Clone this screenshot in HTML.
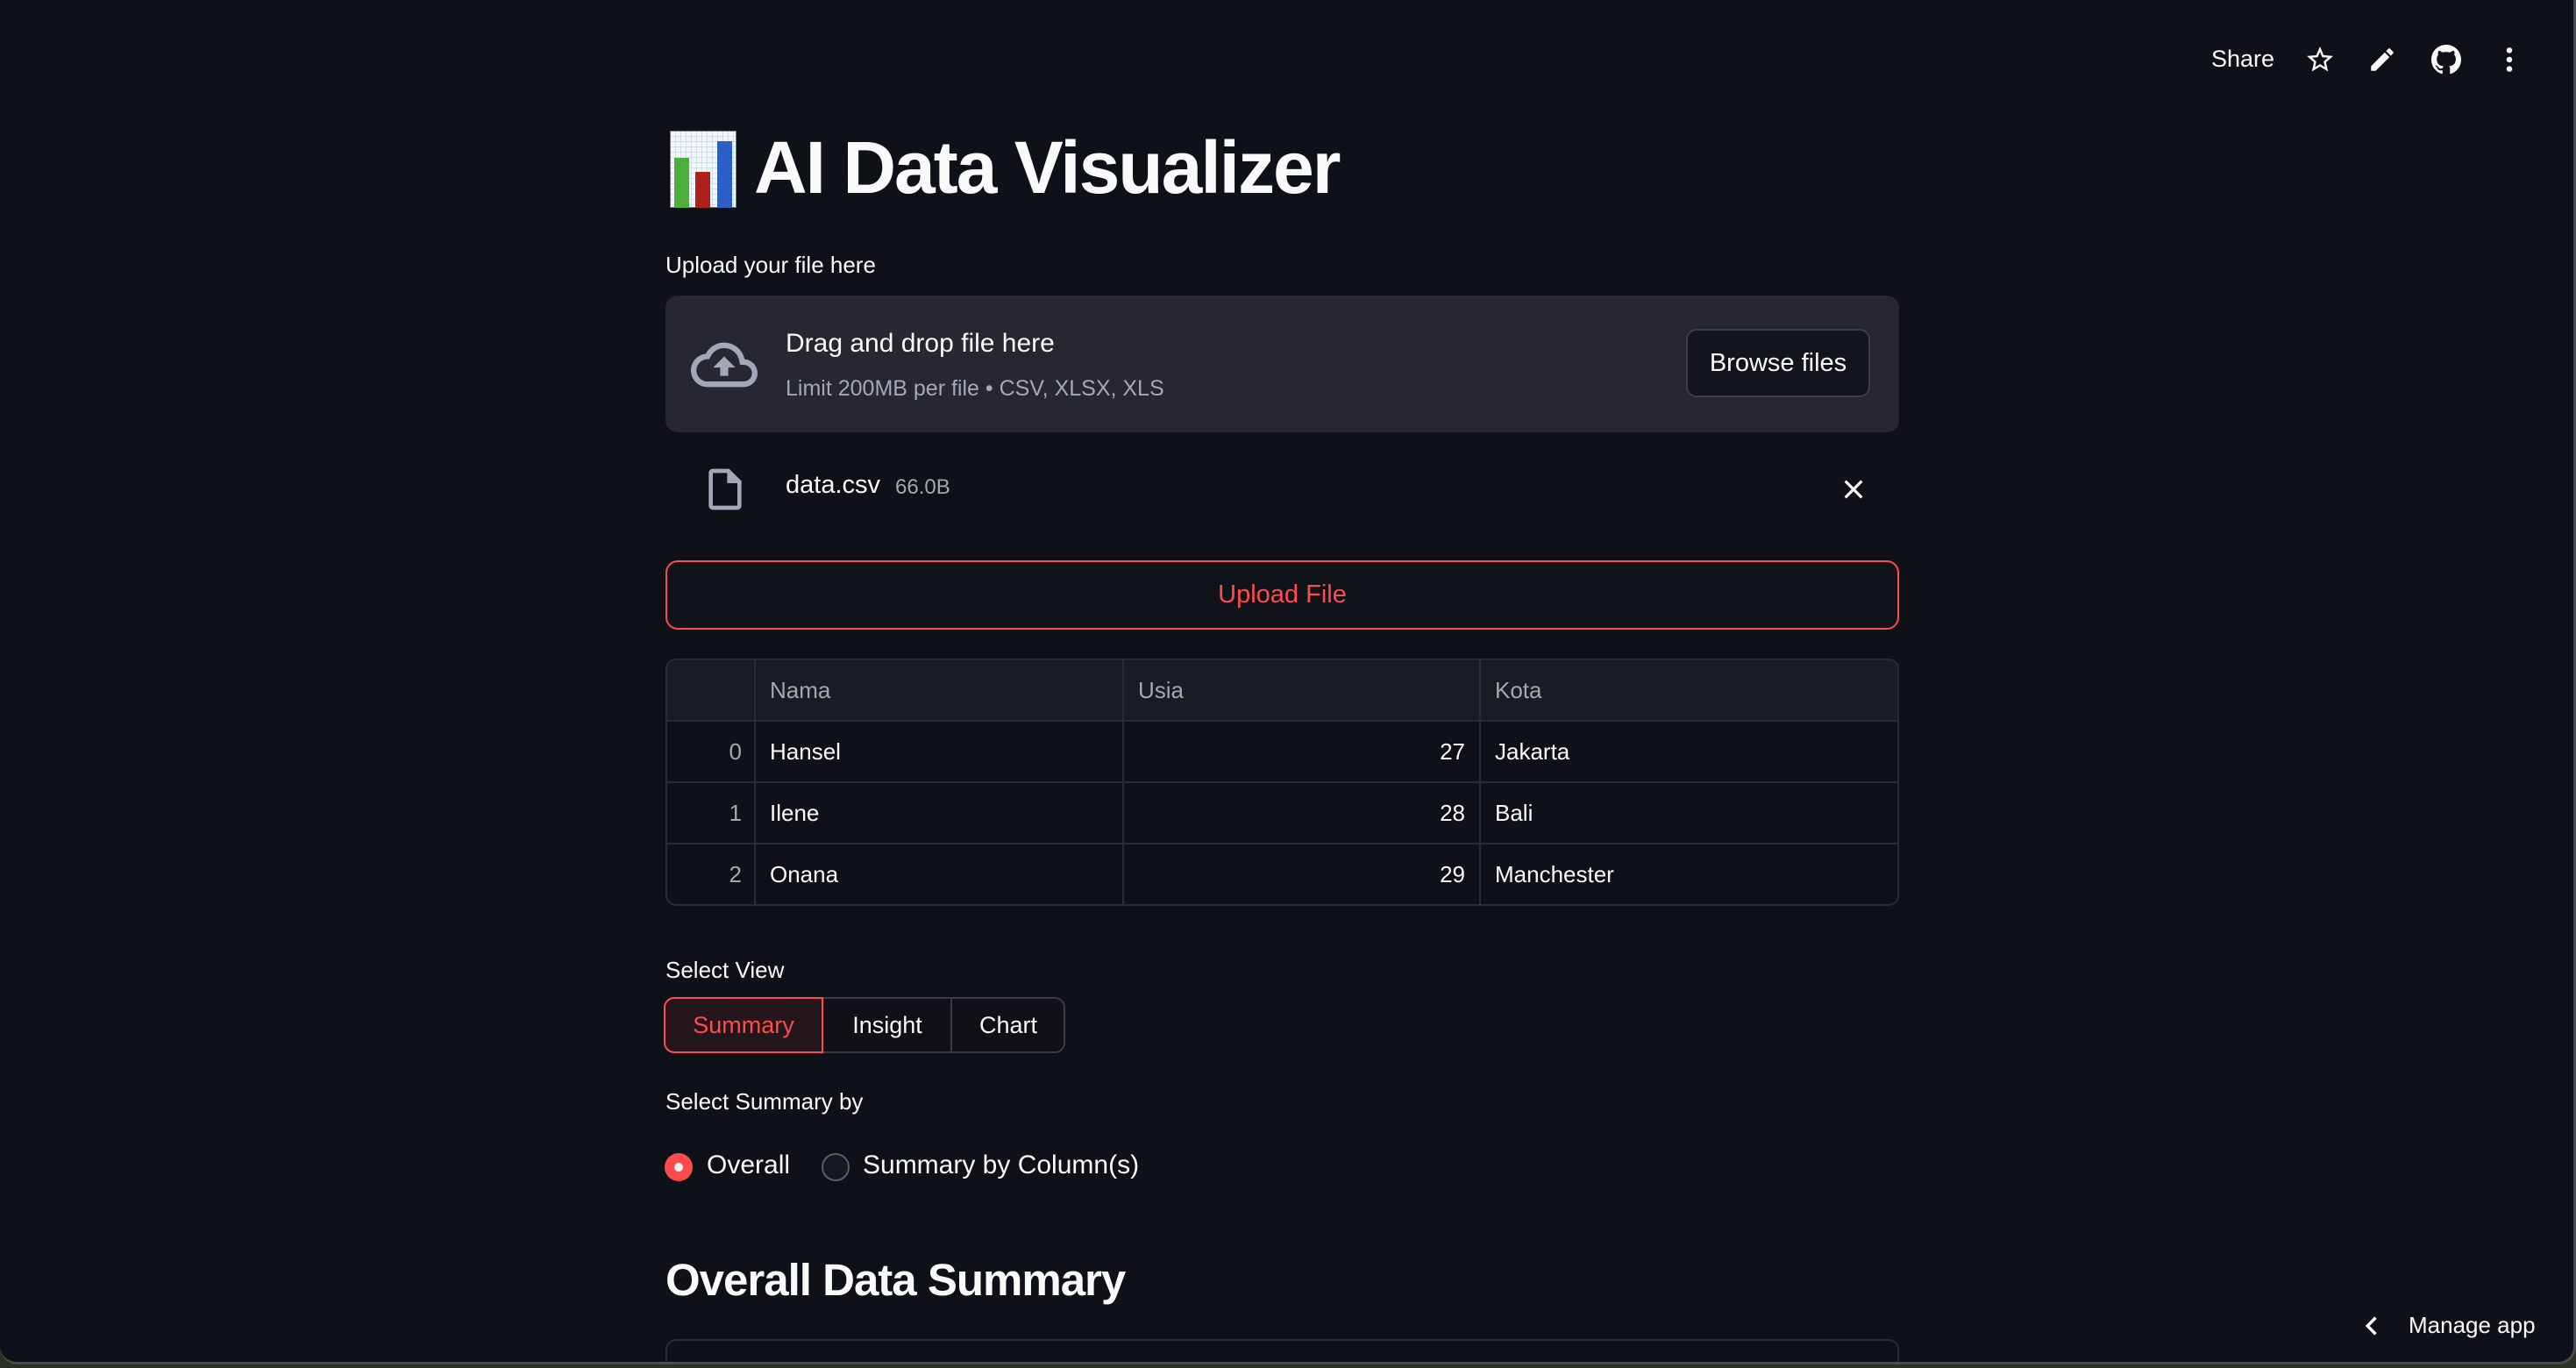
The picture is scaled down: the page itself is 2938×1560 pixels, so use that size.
<!DOCTYPE html>
<html><head><meta charset="utf-8">
<style>
*{margin:0;padding:0;box-sizing:border-box}
html,body{width:2938px;height:1560px;overflow:hidden;background:#2b3224}
body{font-family:"Liberation Sans",sans-serif;color:#fafafa;position:relative}
#win{position:absolute;left:0;top:0;width:2938px;height:1556px;background:#0e1117;border-right:3px solid #4a4b52;border-bottom:3px solid #4a4b52;border-radius:0 0 20px 20px;overflow:hidden}
.a{position:absolute;white-space:nowrap}
.lbl{font-size:26px;color:#fafafa}
.tbl{position:absolute;left:759px;top:751px;width:1407px;height:282px;border:2px solid #2a2c35;border-radius:12px;overflow:hidden}
.row{position:absolute;left:0;width:100%;height:70px;border-bottom:2px solid #2a2c35;font-size:26px}
.row div{position:absolute;top:0;height:100%;line-height:68px;border-right:2px solid #2a2c35}
.c0{left:0;width:101px;text-align:right;padding-right:14px;color:#a3a8b8}
.c1{left:101px;width:420px;padding-left:16px}
.c2{left:521px;width:407px;text-align:right;padding-right:16px}
.c3{left:928px;width:479px;padding-left:16px;border-right:none!important}
.hd div{color:#a3a8b8}
</style></head><body>
<div id="win">
<!-- header -->
<div class="a" style="left:2522px;top:52px;font-size:27px">Share</div>
<svg class="a" style="left:2628px;top:50px" width="36" height="36" viewBox="0 0 24 24"><path fill="#fafafa" d="M22 9.24l-7.19-.62L12 2 9.19 8.63 2 9.24l5.46 4.73L5.82 21 12 17.27 18.18 21l-1.63-7.03L22 9.24zM12 15.4l-3.76 2.27 1-4.28-3.32-2.88 4.38-.38L12 6.1l1.71 4.04 4.38.38-3.32 2.880 1 4.28L12 15.4z"/></svg>
<svg class="a" style="left:2700px;top:51px" width="34" height="34" viewBox="0 0 24 24"><path fill="#fafafa" d="M3 17.25V21h3.75L17.81 9.94l-3.75-3.75L3 17.25zM20.71 7.04a1 1 0 000-1.410l-2.34-2.34a1 1 0 00-1.41 0l-1.83 1.83 3.75 3.75 1.83-1.83z"/></svg>
<svg class="a" style="left:2773px;top:51px" width="34" height="34" viewBox="0 0 16 16"><path fill="#fafafa" d="M8 0C3.58 0 0 3.58 0 8c0 3.54 2.29 6.53 5.47 7.59.4.07.55-.17.55-.38 0-.19-.01-.82-.01-1.49-2.01.37-2.53-.49-2.69-.94-.09-.23-.48-.94-.82-1.13-.28-.15-.68-.52-.01-.53.63-.01 1.08.58 1.23.82.72 1.21 1.87.87 2.33.66.07-.52.28-.87.51-1.07-1.78-.2-3.64-.89-3.64-3.95 0-.87.31-1.59.82-2.15-.08-.2-.36-1.02.08-2.12 0 0 .67-.21 2.2.82.64-.18 1.32-.27 2-.27.68 0 1.36.09 2 .27 1.53-1.04 2.2-.82 2.2-.82.44 1.1.16 1.92.08 2.12.51.56.82 1.27.82 2.15 0 3.07-1.87 3.75-3.65 3.95.29.25.54.73.54 1.48 0 1.07-.01 1.93-.01 2.2 0 .21.15.46.55.38A8.013 8.013 0 0016 8c0-4.42-3.58-8-8-8z"/></svg>
<svg class="a" style="left:2845px;top:50px" width="34" height="36" viewBox="0 0 24 24"><circle cx="12" cy="4.5" r="2.3" fill="#fafafa"/><circle cx="12" cy="12" r="2.3" fill="#fafafa"/><circle cx="12" cy="19.5" r="2.3" fill="#fafafa"/></svg>

<!-- title -->
<svg class="a" style="left:764px;top:149px" width="76" height="88" viewBox="0 0 76 88">
<defs><pattern id="g" width="6" height="6" patternUnits="userSpaceOnUse"><rect width="6" height="6" fill="#f4f8fc"/><path d="M0 0H6M0 0V6" stroke="#c5d8ee" stroke-width="1.5"/></pattern></defs>
<rect x="0" y="0" width="76" height="88" fill="url(#g)" stroke="#777" stroke-width="2"/>
<rect x="5" y="31" width="17" height="57" fill="#4caf3c"/>
<rect x="29" y="47" width="17" height="41" fill="#ad2218"/>
<rect x="54" y="12" width="17" height="76" fill="#2b5fc4"/>
</svg>
<div class="a" style="left:860px;top:143px;font-size:84px;font-weight:bold;letter-spacing:-2px">AI Data Visualizer</div>

<div class="a lbl" style="left:759px;top:287px">Upload your file here</div>
<!-- dropzone -->
<div class="a" style="left:759px;top:337px;width:1407px;height:156px;background:#262730;border-radius:14px"></div>
<svg class="a" style="left:788px;top:378px" width="76" height="76" viewBox="0 0 24 24"><path fill="#a3a8b8" d="M19.35 10.04A7.49 7.490 0 0012 4C9.11 4 6.6 5.64 5.35 8.04A5.994 5.994 0 000 14c0 3.31 2.69 6 6 6h13c2.76 0 5-2.24 5-5 0-2.64-2.05-4.780-4.65-4.96zM19 18H6c-2.21 0-4-1.79-4-4 0-2.05 1.53-3.76 3.56-3.97l1.07-.11.5-.95A5.469 5.469 0 0112 6c2.62 0 4.88 1.86 5.39 4.43l.3 1.5 1.53.11A2.98 2.98 0 0122 15c0 1.65-1.35 3-3 3zM8 13h2.55v3h2.9v-3H16l-4-4z"/></svg>
<div class="a" style="left:896px;top:375px;font-size:30px">Drag and drop file here</div>
<div class="a" style="left:896px;top:429px;font-size:25px;color:#a3a8b8">Limit 200MB per file • CSV, XLSX, XLS</div>
<div class="a" style="left:1923px;top:375px;width:210px;height:78px;background:#13151c;border:2px solid #3d3f4a;border-radius:12px;font-size:29px;text-align:center;line-height:74px">Browse files</div>

<!-- file row -->
<svg class="a" style="left:796px;top:530px" width="62" height="56" viewBox="0 0 24 24"><path fill="#a3a8b8" d="M14 2H6c-1.1 0-2 .9-2 2v16c0 1.1.9 2 2 2h12c1.1 0 2-.9 2-2V8l-6-6zM6 20V4h7v5h5v11H6z"/></svg>
<div class="a" style="left:896px;top:537px;font-size:29px">data.csv</div>
<div class="a" style="left:1021px;top:542px;font-size:24px;color:#a3a8b8">66.0B</div>
<svg class="a" style="left:2098px;top:542px" width="32" height="32" viewBox="0 0 24 24"><path stroke="#fafafa" stroke-width="2.4" d="M5 5L19 19M19 5L5 19"/></svg>

<!-- upload button -->
<div class="a" style="left:759px;top:639px;width:1407px;height:79px;border:2px solid #ff4b4b;border-radius:14px;background:#11131a;color:#ff4b4b;font-size:29px;text-align:center;line-height:75px">Upload File</div>

<!-- table -->
<div class="tbl">
 <div class="row hd" style="top:0;background:#1a1c24"><div class="c0"></div><div class="c1">Nama</div><div class="c2" style="text-align:left;padding-left:16px">Usia</div><div class="c3">Kota</div></div>
 <div class="row" style="top:70px"><div class="c0">0</div><div class="c1">Hansel</div><div class="c2">27</div><div class="c3">Jakarta</div></div>
 <div class="row" style="top:140px"><div class="c0">1</div><div class="c1">Ilene</div><div class="c2">28</div><div class="c3">Bali</div></div>
 <div class="row" style="top:210px;border-bottom:none"><div class="c0">2</div><div class="c1">Onana</div><div class="c2">29</div><div class="c3">Manchester</div></div>
</div>

<div class="a lbl" style="left:759px;top:1091px">Select View</div>
<div class="a" style="left:757px;top:1137px;width:458px;height:64px;border:2px solid #3a3c45;border-radius:12px;background:#0f1117"></div>
<div class="a" style="left:1084px;top:1139px;width:2px;height:60px;background:#3a3c45"></div>
<div class="a" style="left:757px;top:1137px;width:182px;height:64px;border:2px solid #ff4b4b;border-radius:12px 0 0 12px;background:#24161b;color:#ff4b4b;font-size:27px;text-align:center;line-height:60px">Summary</div>
<div class="a" style="left:939px;top:1137px;width:146px;height:64px;font-size:27px;text-align:center;line-height:64px">Insight</div>
<div class="a" style="left:1085px;top:1137px;width:130px;height:64px;font-size:27px;text-align:center;line-height:64px">Chart</div>

<div class="a lbl" style="left:759px;top:1241px">Select Summary by</div>
<div class="a" style="left:758px;top:1315px;width:32px;height:32px;border-radius:50%;background:#ff4b4b"></div>
<div class="a" style="left:769px;top:1326px;width:10px;height:10px;border-radius:50%;background:#f0f2f6"></div>
<div class="a" style="left:806px;top:1312px;font-size:30px">Overall</div>
<div class="a" style="left:937px;top:1315px;width:32px;height:32px;border-radius:50%;border:2px solid #5a5c66;background:#161820"></div>
<div class="a" style="left:984px;top:1312px;font-size:30px">Summary by Column(s)</div>

<div class="a" style="left:759px;top:1430px;font-size:51px;font-weight:bold;letter-spacing:-1px">Overall Data Summary</div>
<div class="a" style="left:759px;top:1527px;width:1407px;height:60px;border:2px solid #2a2c35;border-radius:12px"></div>

<!-- manage app -->
<svg class="a" style="left:2692px;top:1496px" width="28" height="32" viewBox="0 0 24 24"><path fill="none" stroke="#fafafa" stroke-width="3" d="M15 4L7 12L15 20"/></svg>
<div class="a" style="left:2747px;top:1496px;font-size:26px">Manage app</div>
</div>
</body></html>
